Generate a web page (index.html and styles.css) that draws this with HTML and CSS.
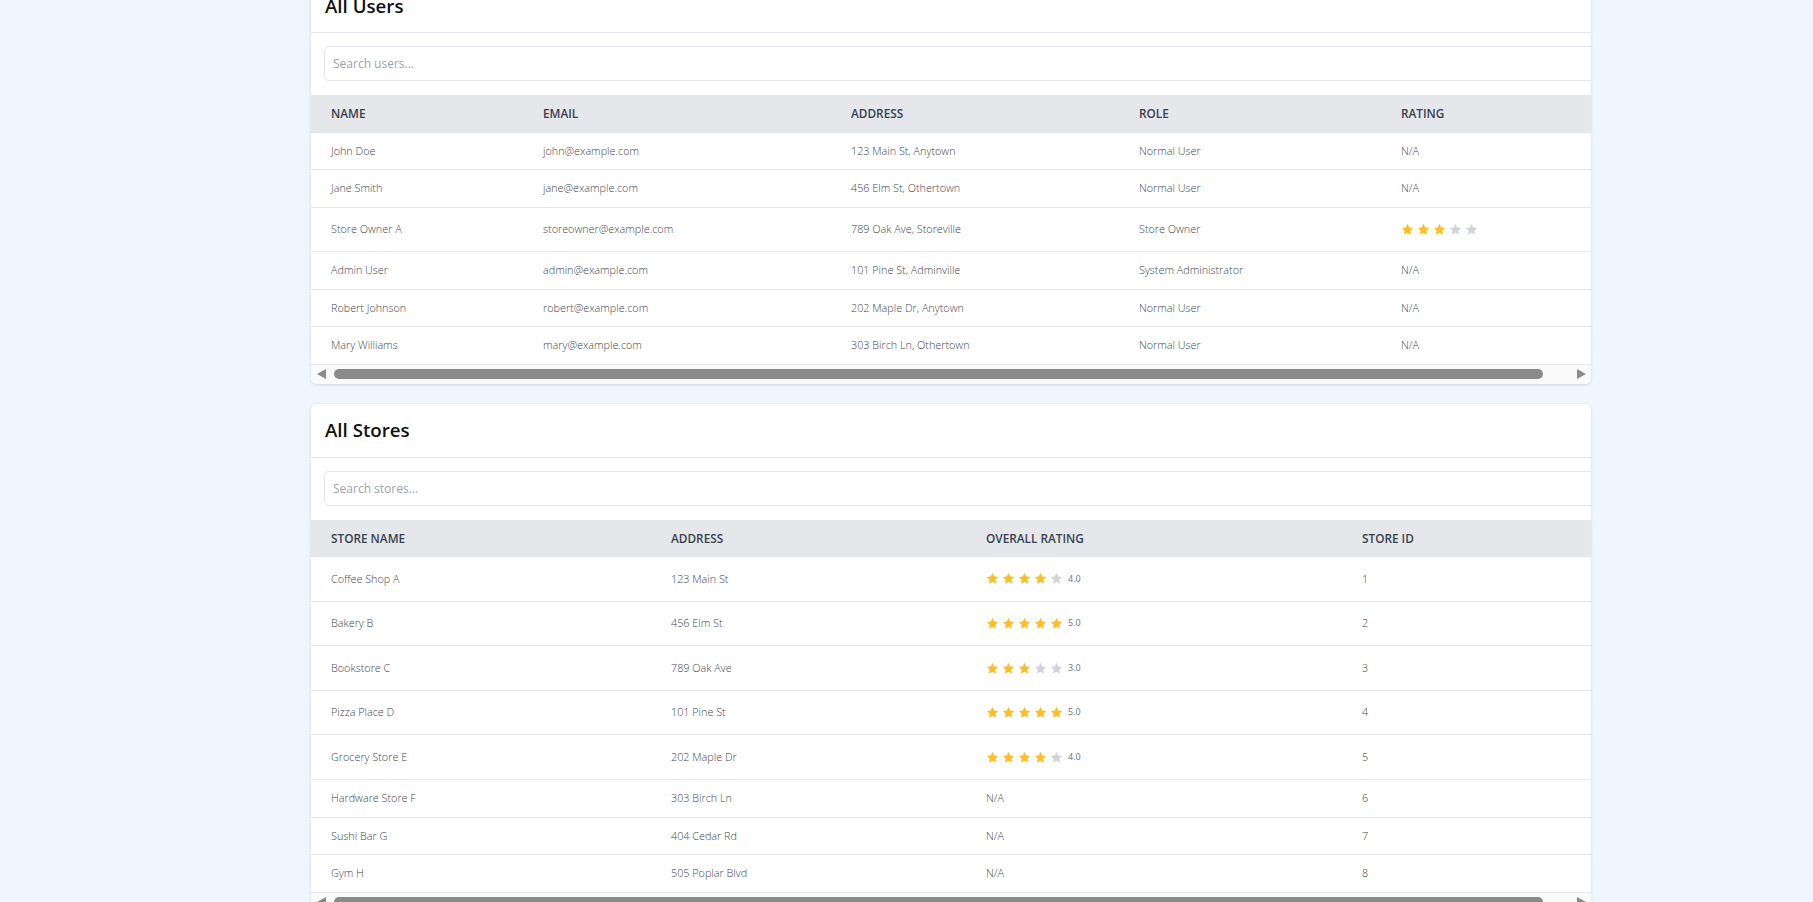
FILE: index.html
```html
<!DOCTYPE html>
<html lang="en">
<head>
<meta charset="utf-8">
<title>Admin Dashboard</title>
<link rel="stylesheet" href="styles.css">
</head>
<body>
<svg class="defs" width="0" height="0" aria-hidden="true">
  <symbol id="star" viewBox="0 0 24 24"><path d="M12 1.6l3.2 6.6 7.2 1-5.2 5.1 1.25 7.2L12 18.1l-6.45 3.4L6.8 14.3 1.6 9.2l7.2-1z"/></symbol>
  <symbol id="arr-l" viewBox="0 0 9 10"><path d="M9 0V10L0 5Z"/></symbol>
  <symbol id="arr-r" viewBox="0 0 9 10"><path d="M0 0V10L9 5Z"/></symbol>
</svg>
<main class="page">
  <section class="card">
    <header class="card-head"><h2 class="card-title">All Users</h2></header>
    <div class="scroll">
      <div class="scroll-inner">
        <div class="search-wrap"><input class="search" type="text" placeholder="Search users..."></div>
        <table class="tbl users">
          <thead>
            <tr><th>Name</th><th>Email</th><th>Address</th><th>Role</th><th>Rating</th></tr>
          </thead>
          <tbody>
            <tr><td>John Doe</td><td>john@example.com</td><td>123 Main St, Anytown</td><td>Normal User</td><td>N/A</td></tr>
            <tr><td>Jane Smith</td><td>jane@example.com</td><td>456 Elm St, Othertown</td><td>Normal User</td><td>N/A</td></tr>
            <tr><td>Store Owner A</td><td>storeowner@example.com</td><td>789 Oak Ave, Storeville</td><td>Store Owner</td>
              <td><div class="stars">
                <svg class="star on"><use href="#star"/></svg><svg class="star on"><use href="#star"/></svg><svg class="star on"><use href="#star"/></svg><svg class="star"><use href="#star"/></svg><svg class="star"><use href="#star"/></svg>
              </div></td></tr>
            <tr><td>Admin User</td><td>admin@example.com</td><td>101 Pine St, Adminville</td><td>System Administrator</td><td>N/A</td></tr>
            <tr><td>Robert Johnson</td><td>robert@example.com</td><td>202 Maple Dr, Anytown</td><td>Normal User</td><td>N/A</td></tr>
            <tr><td>Mary Williams</td><td>mary@example.com</td><td>303 Birch Ln, Othertown</td><td>Normal User</td><td>N/A</td></tr>
          </tbody>
        </table>
      </div>
    </div>
    <div class="hbar">
      <span class="hbar-btn left"><svg class="arr"><use href="#arr-l"/></svg></span>
      <span class="hbar-track"><span class="hbar-thumb"></span></span>
      <span class="hbar-btn right"><svg class="arr"><use href="#arr-r"/></svg></span>
    </div>
  </section>

  <section class="card">
    <header class="card-head"><h2 class="card-title">All Stores</h2></header>
    <div class="scroll">
      <div class="scroll-inner">
        <div class="search-wrap"><input class="search" type="text" placeholder="Search stores..."></div>
        <table class="tbl stores">
          <thead>
            <tr><th>Store Name</th><th>Address</th><th>Overall Rating</th><th>Store ID</th></tr>
          </thead>
          <tbody>
            <tr><td>Coffee Shop A</td><td>123 Main St</td>
              <td><div class="stars">
                <svg class="star on"><use href="#star"/></svg><svg class="star on"><use href="#star"/></svg><svg class="star on"><use href="#star"/></svg><svg class="star on"><use href="#star"/></svg><svg class="star"><use href="#star"/></svg><span class="score">4.0</span>
              </div></td><td>1</td></tr>
            <tr><td>Bakery B</td><td>456 Elm St</td>
              <td><div class="stars">
                <svg class="star on"><use href="#star"/></svg><svg class="star on"><use href="#star"/></svg><svg class="star on"><use href="#star"/></svg><svg class="star on"><use href="#star"/></svg><svg class="star on"><use href="#star"/></svg><span class="score">5.0</span>
              </div></td><td>2</td></tr>
            <tr><td>Bookstore C</td><td>789 Oak Ave</td>
              <td><div class="stars">
                <svg class="star on"><use href="#star"/></svg><svg class="star on"><use href="#star"/></svg><svg class="star on"><use href="#star"/></svg><svg class="star"><use href="#star"/></svg><svg class="star"><use href="#star"/></svg><span class="score">3.0</span>
              </div></td><td>3</td></tr>
            <tr><td>Pizza Place D</td><td>101 Pine St</td>
              <td><div class="stars">
                <svg class="star on"><use href="#star"/></svg><svg class="star on"><use href="#star"/></svg><svg class="star on"><use href="#star"/></svg><svg class="star on"><use href="#star"/></svg><svg class="star on"><use href="#star"/></svg><span class="score">5.0</span>
              </div></td><td>4</td></tr>
            <tr><td>Grocery Store E</td><td>202 Maple Dr</td>
              <td><div class="stars">
                <svg class="star on"><use href="#star"/></svg><svg class="star on"><use href="#star"/></svg><svg class="star on"><use href="#star"/></svg><svg class="star on"><use href="#star"/></svg><svg class="star"><use href="#star"/></svg><span class="score">4.0</span>
              </div></td><td>5</td></tr>
            <tr><td>Hardware Store F</td><td>303 Birch Ln</td><td>N/A</td><td>6</td></tr>
            <tr><td>Sushi Bar G</td><td>404 Cedar Rd</td><td>N/A</td><td>7</td></tr>
            <tr><td>Gym H</td><td>505 Poplar Blvd</td><td>N/A</td><td>8</td></tr>
          </tbody>
        </table>
      </div>
    </div>
    <div class="hbar">
      <span class="hbar-btn left"><svg class="arr"><use href="#arr-l"/></svg></span>
      <span class="hbar-track"><span class="hbar-thumb"></span></span>
      <span class="hbar-btn right"><svg class="arr"><use href="#arr-r"/></svg></span>
    </div>
  </section>
</main>
</body>
</html>
```

FILE: styles.css
```css
html {
  overflow: hidden;
}
body {
  margin: 0;
  background: #eff6ff;
  font-family: "Open Sans", "Noto Sans", "Liberation Sans", sans-serif;
  color: #4b5563;
}
.defs {
  position: absolute;
  width: 0;
  height: 0;
}
.page {
  display: flex;
  flex-direction: column;
  gap: 20px;
  margin-top: -21px;
  padding: 0 222px 40px 311px;
}
.card {
  background: #fff;
  border-radius: 6px;
  box-shadow: 0 1px 4px rgba(0, 0, 0, 0.09), 0 1px 2px rgba(0, 0, 0, 0.05);
  overflow: hidden;
}
.card-head {
  height: 53px;
  display: flex;
  align-items: center;
  padding: 0 14px;
  border-bottom: 1px solid #e5e7eb;
}
.card-title {
  margin: 0;
  font-size: 18.7px;
  font-weight: 600;
  color: #111;
  line-height: 22px;
}
.scroll {
  overflow: hidden;
}
.scroll-inner {
  width: 1317px;
}
.search-wrap {
  padding: 13px 13px 14px;
}
.search {
  display: block;
  box-sizing: border-box;
  width: 100%;
  height: 35px;
  border: 1px solid #e5e7eb;
  border-radius: 5px;
  padding: 0 8px;
  font-family: "Open Sans", "Noto Sans", sans-serif;
  font-size: 12px;
  color: #374151;
  outline: none;
}
.search::placeholder {
  color: #9ca3af;
}
.tbl {
  width: 100%;
  border-collapse: collapse;
  table-layout: fixed;
}
.tbl th {
  box-sizing: border-box;
  background: #e5e7eb;
  text-align: left;
  padding: 10px 20px;
  line-height: 17.5px;
  font-size: 11.8px;
  font-weight: 600;
  text-transform: uppercase;
  color: #374151;
  white-space: nowrap;
}
.tbl td {
  padding: 10px 20px;
  line-height: 16.5px;
  font-size: 10.8px;
  font-weight: 300;
  color: #3f4652;
  border-bottom: 1px solid #e5e7eb;
  white-space: nowrap;
}
.users th:nth-child(1) { width: 212px; }
.users th:nth-child(2) { width: 308px; }
.users th:nth-child(3) { width: 288px; }
.users th:nth-child(4) { width: 262px; }
.stores th:nth-child(1) { width: 340px; }
.stores th:nth-child(2) { width: 315px; }
.stores th:nth-child(3) { width: 376px; }
.stars {
  display: flex;
  align-items: center;
  gap: 3px;
  height: 23.6px;
}
.star {
  flex: none;
  width: 13px;
  height: 13px;
  fill: #d1d5db;
}
.star.on {
  fill: #fbbf24;
}
.score {
  margin-left: 2px;
  font-size: 9px;
  font-weight: 400;
  color: #6b7280;
}
.hbar {
  display: flex;
  align-items: center;
  height: 19px;
  background: #fafafa;
}
.hbar-btn {
  flex: none;
  width: 17px;
  height: 19px;
  display: flex;
  align-items: center;
}
.hbar-btn.left {
  justify-content: flex-end;
  padding-right: 2px;
  box-sizing: border-box;
}
.hbar-btn.right {
  padding-left: 3px;
  box-sizing: border-box;
}
.arr {
  width: 9px;
  height: 10px;
  fill: #8a8a8a;
}
.hbar-track {
  flex: 1;
  display: flex;
  align-items: center;
  height: 19px;
}
.hbar-thumb {
  margin-left: 6px;
  width: 1209px;
  height: 10px;
  border-radius: 5px;
  background: #8a8a8a;
}
```
